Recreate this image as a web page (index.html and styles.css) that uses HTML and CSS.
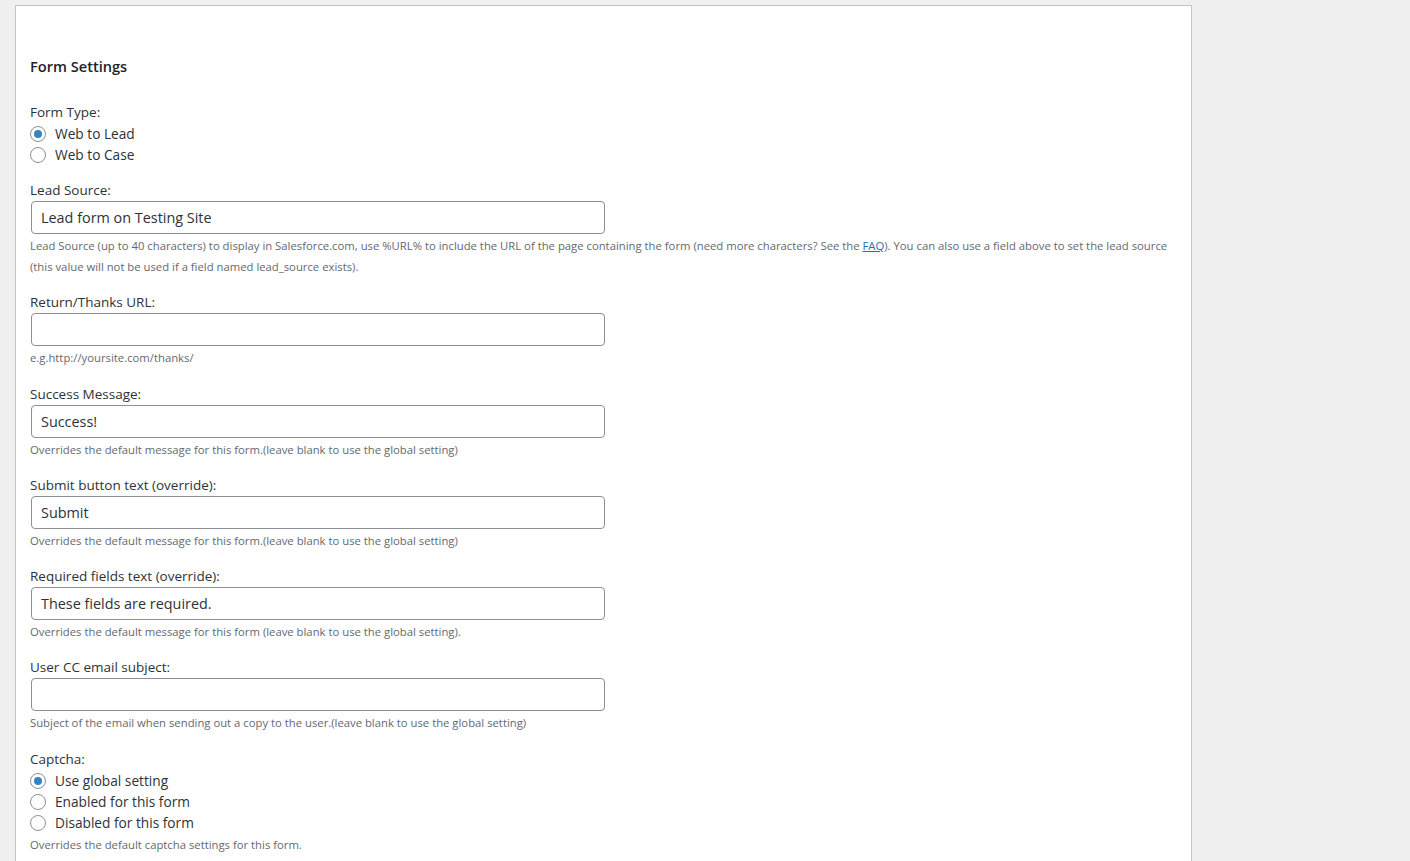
FILE: index.html
```html
<!DOCTYPE html>
<html lang="en">
<head>
<meta charset="utf-8">
<title>Form Settings</title>
<link rel="stylesheet" href="styles.css">
</head>
<body>
<div class="panel">
  <h3 class="title">Form Settings</h3>

  <div class="field">
    <div class="label">Form Type:</div>
    <label class="radio"><span class="circle checked"></span>Web to Lead</label>
    <label class="radio"><span class="circle"></span>Web to Case</label>
  </div>

  <div class="field">
    <div class="label">Lead Source:</div>
    <div class="input">Lead form on Testing Site</div>
    <p class="desc">Lead Source (up to 40 characters) to display in Salesforce.com, use %URL% to include the URL of the page containing the form (need more characters? See the <a href="#">FAQ</a>). You can also use a field above to set the lead source (this value will not be used if a field named lead_source exists).</p>
  </div>

  <div class="field field-url">
    <div class="label">Return/Thanks URL:</div>
    <div class="input"></div>
    <p class="desc">e.g.http://yoursite.com/thanks/</p>
  </div>

  <div class="field">
    <div class="label">Success Message:</div>
    <div class="input">Success!</div>
    <p class="desc">Overrides the default message for this form.(leave blank to use the global setting)</p>
  </div>

  <div class="field">
    <div class="label">Submit button text (override):</div>
    <div class="input">Submit</div>
    <p class="desc">Overrides the default message for this form.(leave blank to use the global setting)</p>
  </div>

  <div class="field">
    <div class="label">Required fields text (override):</div>
    <div class="input">These fields are required.</div>
    <p class="desc">Overrides the default message for this form (leave blank to use the global setting).</p>
  </div>

  <div class="field field-url">
    <div class="label">User CC email subject:</div>
    <div class="input"></div>
    <p class="desc">Subject of the email when sending out a copy to the user.(leave blank to use the global setting)</p>
  </div>

  <div class="field">
    <div class="label">Captcha:</div>
    <label class="radio"><span class="circle checked"></span>Use global setting</label>
    <label class="radio"><span class="circle"></span>Enabled for this form</label>
    <label class="radio"><span class="circle"></span>Disabled for this form</label>
    <p class="desc">Overrides the default captcha settings for this form.</p>
  </div>
</div>
</body>
</html>
```

FILE: styles.css
```css
html, body {
  margin: 0;
  padding: 0;
  background: #f0f0f1;
}

body {
  font-family: "Open Sans", "Noto Sans", sans-serif;
  color: #3c434a;
}

.panel {
  margin: 5px 0 0 15px;
  width: 1147px;
  padding: 50px 14px 40px 14px;
  background: #fff;
  border: 1px solid #c3c4c7;
  min-height: 900px;
}

.title {
  margin: 0 0 25px 0;
  font-size: 14.6px;
  line-height: 20px;
  font-weight: 600;
  color: #1d2327;
}

.field {
  margin-bottom: 14px;
}

.field-url {
  margin-bottom: 15px;
}

.label {
  font-size: 13.5px;
  line-height: 22px;
  color: #2c3338;
}

.radio {
  display: flex;
  align-items: center;
  height: 21px;
  font-size: 13.7px;
  color: #2c3338;
}

.circle {
  box-sizing: border-box;
  width: 16px;
  height: 16px;
  border: 1px solid #8c8f94;
  border-radius: 50%;
  margin-right: 9px;
  display: flex;
  align-items: center;
  justify-content: center;
  flex: none;
}

.circle.checked::before {
  content: "";
  width: 8px;
  height: 8px;
  border-radius: 50%;
  background: #3582c4;
}

.input {
  box-sizing: border-box;
  margin: 0 1px;
  width: 574px;
  height: 33px;
  padding: 0 9px;
  border: 1px solid #8c8f94;
  border-radius: 4px;
  font-size: 14.4px;
  line-height: 31px;
  color: #2c3338;
}

.desc {
  margin: 1px 0 0 0;
  font-size: 11.3px;
  line-height: 21px;
  color: #646970;
}

.desc a {
  color: #2271b1;
}
```
